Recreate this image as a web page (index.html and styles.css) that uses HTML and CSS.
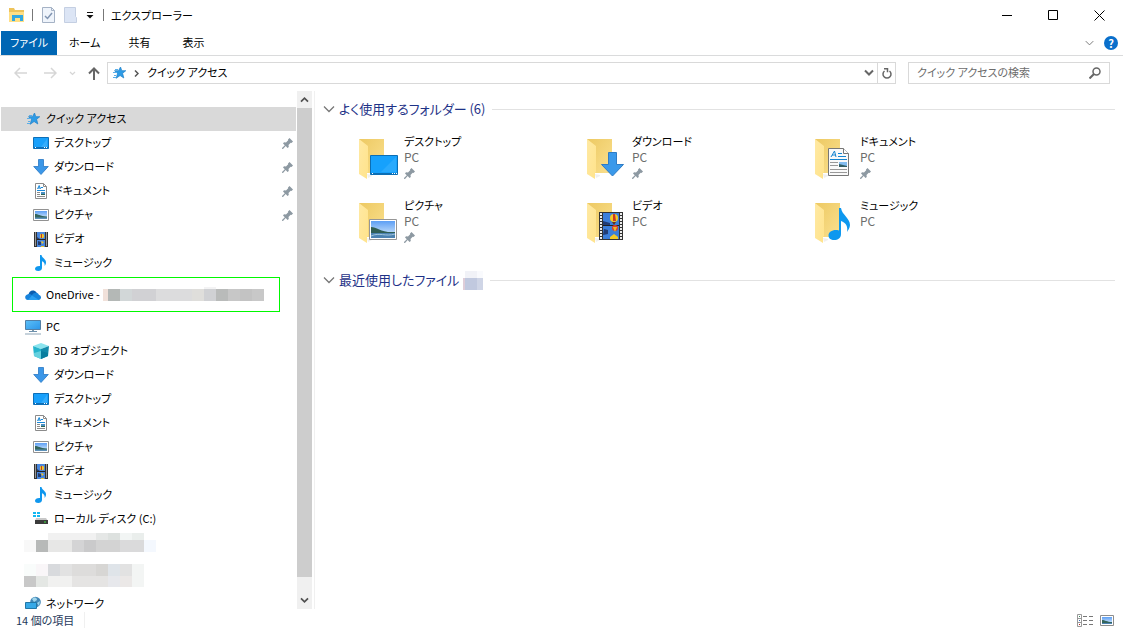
FILE: index.html
```html
<!DOCTYPE html>
<html lang="ja">
<head>
<meta charset="utf-8">
<title>エクスプローラー</title>
<link rel="stylesheet" href="styles.css">
</head>
<body>
<svg class="defs" aria-hidden="true">
  <defs>
    <linearGradient id="g-back" x1="0" y1="0" x2="1" y2="1"><stop offset="0" stop-color="#edc962"/><stop offset="1" stop-color="#fae08f"/></linearGradient>
    <linearGradient id="g-flap" x1="0" y1="0" x2="1" y2="1"><stop offset="0" stop-color="#ffe9a3"/><stop offset="1" stop-color="#ffe38b"/></linearGradient>
    <linearGradient id="g-sky" x1="0" y1="0" x2="0" y2="1"><stop offset="0" stop-color="#5d9ff5"/><stop offset="1" stop-color="#e2f1fb"/></linearGradient>
    <linearGradient id="g-screen" x1="0" y1="0" x2="1" y2="1"><stop offset="0" stop-color="#5cc0f8"/><stop offset="1" stop-color="#2b95e8"/></linearGradient>
  </defs>
  <symbol id="star" viewBox="0 0 16 16">
    <path d="M9.500 2l1.300 3.700h4l-3.200 2.600 1.200 4.700-3.700-2.500-3.900 2.800 1.300-4.800-3-2.800h4z" fill="#2d9be6" stroke="#1c7fc9" stroke-width=".7"/>
    <path d="M4 4.500h3M2 7.500h4M3 10.500h2M2 12.500h3" stroke="#5aaee8"/>
  </symbol>
  <symbol id="desktop" viewBox="0 0 16 16">
    <path d="M.5 2.500h15v11H.5z" fill="#18a0fb" stroke="#0d6fb8"/>
    <path d="M8 12l6-8v8z" fill="#35adfc"/>
    <path d="M1 12.500h14" stroke="#0d6fb8"/><path d="M2 12.500h1M11 12.500h1M13 12.500h1" stroke="#fff"/>
  </symbol>
  <symbol id="download" viewBox="0 0 16 16">
    <path d="M5.500.5h5v7h4.800L8 15.500.7 7.500h4.800z" fill="#3b97e8" stroke="#2877c4" stroke-width=".8"/>
  </symbol>
  <symbol id="document" viewBox="0 0 16 16">
    <path d="M2.500.5h8l3 3v12h-11z" fill="#fff" stroke="#8b8b8b"/><path d="M10.500.5v3h3" fill="none" stroke="#8b8b8b"/>
    <path d="M4.500 6l1.700-3.500L7.500 6M5 5h2" fill="none" stroke="#1988d8"/>
    <path d="M8 4.500h2M4 7.500h8" stroke="#1988d8"/><path d="M4 9.500h3M4 11.500h3M4 13.500h8" stroke="#8b8b8b"/>
    <path d="M8 9h4v3H8z" fill="#4a8fc2"/><path d="M8 11h4v1H8z" fill="#2d6250"/>
  </symbol>
  <symbol id="picture" viewBox="0 0 16 16">
    <path d="M.5 2.500h15v11H.5z" fill="#fff" stroke="#929292"/>
    <path d="M2 4h12v8H2z" fill="url(#g-sky)"/><path d="M2 7c3 0 5 2 12 2.500V11H2z" fill="#34665e"/><path d="M2 10.500h12V12H2z" fill="#5e92ba"/>
  </symbol>
  <symbol id="video" viewBox="0 0 16 16">
    <path d="M1 1h14v15H1z" fill="#333"/><path d="M4 1h8v15H4z" fill="#4785dc"/>
    <path d="M2.500 1.500v14M13.500 1.500v14" stroke="#fff" stroke-dasharray="1 1"/>
    <path d="M4 8.500h8" stroke="#222"/><circle cx="9" cy="5" r="2.200" fill="#f1c52c"/><path d="M8 3h1v4H8z" fill="#c33820"/>
    <path d="M4 6l3 2H4zM5 10l3 1v3H5z" fill="#233d70"/><path d="M8 10l3 1-2 2zM8 15h3v1H8z" fill="#f1c52c"/>
  </symbol>
  <symbol id="music" viewBox="0 0 16 16">
    <path d="M7 0h1.500c.3 3 4.700 4 4.500 7.500-.1 1.700-.7 2.600-1.300 3.500.3-3-1.200-4-2.700-4.700V13c0 1.700-1.700 3-3.800 3C3.400 16 2 15.200 2 13.800 2 12 4 10.800 7 11z" fill="#0f97ee"/>
  </symbol>
  <symbol id="cloud" viewBox="0 0 16 16">
    <path d="M3.500 8C3.500 4 8.500 1.500 11.500 5.500L13 8z" fill="#0a5db0"/><path d="M3 13C-.5 13-1 8 3 7.200 5 6.500 6 7.500 7 8l5 5z" fill="#1783dc"/><path d="M7 8c2-3 6-3 7 0 3 .5 2.500 5-.5 5H3z" fill="#1684dc"/><path d="M7 8.500L14 13H3z" fill="#2aa1f2"/>
  </symbol>
  <symbol id="pc" viewBox="0 0 16 16">
    <path d="M.5 1.500h15v9H.5z" fill="url(#g-screen)" stroke="#527fa5"/><path d="M7 11h2v1H7z" fill="#7e99ab"/><path d="M4 12.500h8" stroke="#6d91ad"/><path d="M0 15h16" stroke="#8da5b7"/>
  </symbol>
  <symbol id="cube" viewBox="0 0 16 16">
    <path d="M8 0l8 3-8 3-8-3z" fill="#8be4ee"/><path d="M0 3l8 3v10l-7-3z" fill="#25b5cd"/><path d="M8 6l8-3-1 10-7 3z" fill="#118aaa"/><path d="M1 10l7-2v8l-7-3z" fill="#65d1df"/><path d="M8 8l7 2v3l-7 3z" fill="#087d9e"/>
  </symbol>
  <symbol id="disk" viewBox="0 0 16 16">
    <path d="M0 1h3v2H0zM4 1h3v2H4zM0 4h3v2H0zM4 4h3v2H4z" fill="#12b7f1"/><path d="M3 7h10l2 3H2z" fill="#c8c8c8"/><path d="M2 9h13v4H2z" fill="#3b3b3b"/><path d="M11 11h2" stroke="#3ee542"/>
  </symbol>
  <symbol id="network" viewBox="0 0 16 16">
    <circle cx="10.500" cy="6" r="5.300" fill="#4388b7"/><path d="M7 3c3-3 5-1 5 1L9 6zM12 7l3-2-1 5z" fill="#a0d6ec"/><path d="M.5 6.500h11v6H.5z" fill="#37a9e7" stroke="#2277a6"/>
  </symbol>
  <symbol id="pin" viewBox="0 0 11 11">
    <path d="M6 1.500L7.500 0 11 3.500 9.500 5 8.700 4.800 6.500 7l.3 2L5.500 10 3.700 8.100 1 11 0 10.800V10l2.800-2.800L1 5.400 2 4.200l2 .3 2.200-2.200z" fill="#8d99a2"/>
  </symbol>
  <symbol id="folder" viewBox="0 -1 44 44">
    <path d="M9 36l5 1v1l-4 2z" fill="#efefef"/><path d="M1 1h25v34H9z" fill="url(#g-back)"/><path d="M1 1l9 7v26l-1 1v6L1 36z" fill="url(#g-flap)"/>
  </symbol>
  <symbol id="chev" viewBox="0 0 12 8"><path d="M1 1.500l5 5 5-5" fill="none" stroke="currentColor" stroke-width="1.300"/></symbol>
  <symbol id="chev-bold" viewBox="0 0 10 8"><path d="M1 1.500l4 4 4-4" fill="none" stroke="currentColor" stroke-width="2"/></symbol>
</svg>

<header class="titlebar">
  <svg class="quick" viewBox="0 0 18 16" width="18" height="16"><path d="M1 1h5l1 2h9v12H1z" fill="#eec35a"/><path d="M1 5h15v10H1z" fill="#ffdf85"/><path d="M4 8h11v6h-3v-3H7v3H4z" fill="#32a8e2"/></svg>
  <span class="bar"></span>
  <button class="plain" aria-label="プロパティ"><svg viewBox="0 0 13 16" width="13" height="16"><path d="M.5.500h9l3 3v12H.5z" fill="#eff4fb" stroke="#a5b2c5"/><path d="M9.500.5v3h3" fill="none" stroke="#a5b2c5"/><path d="M3 9l2.500 2.500L10 6" fill="none" stroke="#8194b1" stroke-width="1.500"/></svg></button>
  <button class="plain" aria-label="新しいフォルダー"><svg viewBox="0 0 13 16" width="13" height="16"><path d="M.5.500h11v9l1 1v5H.5z" fill="#dce5f5" stroke="#c4cfe2"/></svg></button>
  <button class="plain" aria-label="カスタマイズ"><svg viewBox="0 0 8 8" width="8" height="8"><path d="M1 1.500h6" stroke="#111"/><path d="M.5 4h7L4 7.500z" fill="#111"/></svg></button>
  <span class="bar"></span>
  <h1 class="title">エクスプローラー</h1>
  <div class="window-buttons">
    <button class="plain win" aria-label="最小化"><svg viewBox="0 0 11 11" width="11" height="11"><path d="M0 5.500h10" stroke="#000"/></svg></button>
    <button class="plain win" aria-label="最大化"><svg viewBox="0 0 11 11" width="11" height="11"><path d="M.5.500h9v9h-9z" fill="none" stroke="#000"/></svg></button>
    <button class="plain win" aria-label="閉じる"><svg viewBox="0 0 11 11" width="11" height="11"><path d="M.5.500l10 10M10.500.500l-10 10" stroke="#000"/></svg></button>
  </div>
</header>

<nav class="ribbon">
  <button class="tab active">ファイル</button>
  <button class="tab">ホーム</button>
  <button class="tab">共有</button>
  <button class="tab">表示</button>
  <div class="ribbon-tools">
    <button class="plain muted" aria-label="リボンの展開"><svg width="9" height="6"><use href="#chev"/></svg></button>
    <button class="help" aria-label="ヘルプ">?</button>
  </div>
</nav>

<div class="addressbar">
  <div class="arrows">
    <button class="plain off" aria-label="戻る"><svg viewBox="0 0 13 12" width="13" height="12"><path d="M13 6H1.500M6 1L1 6l5 5" fill="none" stroke="currentColor" stroke-width="1.500"/></svg></button>
    <button class="plain off" aria-label="進む"><svg viewBox="0 0 13 12" width="13" height="12"><path d="M0 6h11.500M7 1l5 5-5 5" fill="none" stroke="currentColor" stroke-width="1.500"/></svg></button>
    <button class="plain off" aria-label="履歴"><svg width="7" height="5"><use href="#chev-bold"/></svg></button>
    <button class="plain up" aria-label="上へ"><svg viewBox="0 0 12 13" width="12" height="13"><path d="M6 13V1.500M1 6.500l5-5 5 5" fill="none" stroke="currentColor" stroke-width="2"/></svg></button>
  </div>
  <div class="address">
    <svg class="i16"><use href="#star"/></svg>
    <svg viewBox="0 0 5 7" width="5" height="7"><path d="M1 .500l3 3-3 3" fill="none" stroke="#555" stroke-width="1.500"/></svg>
    <button class="plain crumb">クイック アクセス</button>
    <button class="plain drop" aria-label="候補"><svg width="10" height="8"><use href="#chev-bold"/></svg></button>
    <button class="plain refresh" aria-label="更新"><svg viewBox="0 0 10 11" width="10" height="11"><path d="M2.500 3A4 4 0 1 0 7.500 3M2 .800h3.500v3.500" fill="none" stroke="#666" stroke-width="1.500"/></svg></button>
  </div>
  <label class="search">
    <input type="search" placeholder="クイック アクセスの検索" aria-label="クイック アクセスの検索">
    <svg viewBox="0 0 12 12" width="12" height="12"><circle cx="7.500" cy="4.500" r="3.500" fill="none" stroke="#666" stroke-width="1.500"/><path d="M5 7L.500 11.500" stroke="#666" stroke-width="2"/></svg>
  </label>
</div>

<div class="body">
  <nav class="tree">
    <a class="row top selected"><svg class="i16"><use href="#star"/></svg>クイック アクセス</a>
    <a class="row"><svg class="i16"><use href="#desktop"/></svg>デスクトップ<svg class="pin"><use href="#pin"/></svg></a>
    <a class="row"><svg class="i16"><use href="#download"/></svg>ダウンロード<svg class="pin"><use href="#pin"/></svg></a>
    <a class="row"><svg class="i16"><use href="#document"/></svg>ドキュメント<svg class="pin"><use href="#pin"/></svg></a>
    <a class="row"><svg class="i16"><use href="#picture"/></svg>ピクチャ<svg class="pin"><use href="#pin"/></svg></a>
    <a class="row"><svg class="i16"><use href="#video"/></svg>ビデオ</a>
    <a class="row"><svg class="i16"><use href="#music"/></svg>ミュージック</a>
    <a class="row marked"><svg class="i16"><use href="#cloud"/></svg>OneDrive -<svg class="mask-name" viewBox="0 0 161 14" width="161" height="14"><path d="M0 2h5v12H0z" fill="#f1e1da"/><path d="M5 2h12v12H5z" fill="#b4b8b6"/><path d="M17 2h12v12H17z" fill="#d2d7d8"/><path d="M29 2h24v12H29z" fill="#d1d1d4"/><path d="M53 2h36v12H53z" fill="#dcdcdd"/><path d="M89 2h12v12H89z" fill="#dfdedb"/><path d="M101 0h12v2h-12z" fill="#f3f3f4"/><path d="M101 2h12v12h-12z" fill="#d0d1d4"/><path d="M113 2h12v12h-12z" fill="#b9bbba"/><path d="M125 2h12v12h-12z" fill="#c7c7c7"/><path d="M137 2h12v12h-12z" fill="#c3c3c3"/><path d="M149 2h12v12h-12z" fill="#c8c8c8"/></svg></a>
    <a class="row top"><svg class="i16"><use href="#pc"/></svg>PC</a>
    <a class="row"><svg class="i16"><use href="#cube"/></svg>3D オブジェクト</a>
    <a class="row"><svg class="i16"><use href="#download"/></svg>ダウンロード</a>
    <a class="row"><svg class="i16"><use href="#desktop"/></svg>デスクトップ</a>
    <a class="row"><svg class="i16"><use href="#document"/></svg>ドキュメント</a>
    <a class="row"><svg class="i16"><use href="#picture"/></svg>ピクチャ</a>
    <a class="row"><svg class="i16"><use href="#video"/></svg>ビデオ</a>
    <a class="row"><svg class="i16"><use href="#music"/></svg>ミュージック</a>
    <a class="row"><svg class="i16"><use href="#disk"/></svg>ローカル ディスク (C:)</a>
    <svg class="mask" viewBox="0 0 132 19" width="132" height="19"><path d="M24 0h48v7H24z" fill="#f1f1f1"/><path d="M72 0h12v7H72z" fill="#e5e7e6"/><path d="M84 0h12v7H84z" fill="#dde1df"/><path d="M96 0h12v7H96z" fill="#f2f5f4"/><path d="M108 0h12v7h-12z" fill="#eaeeec"/><path d="M0 7h12v12H0z" fill="#f8f8f8"/><path d="M12 7h12v12H12z" fill="#b7b9b8"/><path d="M24 7h24v12H24z" fill="#e7e7e6"/><path d="M48 7h12v12H48z" fill="#d4d4d5"/><path d="M60 7h12v12H60z" fill="#cacacb"/><path d="M72 7h24v12H72z" fill="#d3d3d3"/><path d="M96 7h24v12H96z" fill="#dadadb"/><path d="M120 7h12v12h-12z" fill="#f4f8fe"/></svg>
    <svg class="mask second" viewBox="0 0 132 23" width="132" height="23"><path d="M0 0h12v12H0z" fill="#f9fcfb"/><path d="M12 0h12v12H12z" fill="#f9f6f8"/><path d="M24 0h12v12H24z" fill="#d8dadd"/><path d="M36 0h12v12H36z" fill="#e2e2e2"/><path d="M48 0h24v12H48z" fill="#dddcdb"/><path d="M72 0h12v12H72z" fill="#d7d6d4"/><path d="M84 0h12v12H84z" fill="#dfe4e9"/><path d="M96 0h12v12H96z" fill="#e2e2e2"/><path d="M108 0h12v23h-12z" fill="#f3f5f4"/><path d="M0 12h12v11H0z" fill="#c8c8c8"/><path d="M12 12h12v11H12z" fill="#e4e7e4"/><path d="M24 12h24v11H24z" fill="#f1f1f0"/><path d="M48 12h36v11H48z" fill="#e5e4e3"/><path d="M84 12h12v11H84z" fill="#e7e8ec"/><path d="M96 12h12v11H96z" fill="#ebe8e7"/></svg>
    <a class="row top"><svg class="i16"><use href="#network"/></svg>ネットワーク</a>
  </nav>
  <div class="scrollbar">
    <button class="plain arrow flip" aria-label="上にスクロール"><svg width="9" height="7"><use href="#chev-bold"/></svg></button>
    <div class="thumb"></div>
    <button class="plain arrow" aria-label="下にスクロール"><svg width="9" height="7"><use href="#chev-bold"/></svg></button>
  </div>
  <main class="content">
    <h2 class="group"><svg class="fold"><use href="#chev"/></svg>よく使用するフォルダー (6)</h2>
    <div class="folders">
      <a class="item"><svg class="big" viewBox="0 -1 44 44"><use href="#folder" y="-1" width="44" height="44"/><path d="M12.500 17.500h27v19h-27z" fill="#16a1fc" stroke="#0c6eb4"/><path d="M23 34l15-15v15z" fill="#2aaafd"/><path d="M13 35.500h26" stroke="#0c6eb4"/><path d="M14 35.500h1M34 35.500h1M36 35.500h1M38 35.500h1" stroke="#fff"/></svg><div class="info"><div class="name">デスクトップ</div><div class="place">PC</div><svg class="pin"><use href="#pin"/></svg></div></a>
      <a class="item"><svg class="big" viewBox="0 -1 44 44"><use href="#folder" y="-1" width="44" height="44"/><path d="M22.500 14.500h8v12h7L26.500 38 15.500 26.500h7z" fill="#3a99ea" stroke="#2e7cc5"/></svg><div class="info"><div class="name">ダウンロード</div><div class="place">PC</div><svg class="pin"><use href="#pin"/></svg></div></a>
      <a class="item"><svg class="big" viewBox="0 -1 44 44"><use href="#folder" y="-1" width="44" height="44"/><path d="M14.500 10.500h15l5 5v22h-20z" fill="#fafafa" stroke="#777"/><path d="M29.500 10.500v5h5" fill="#fff" stroke="#777"/><path d="M17 19l3.500-6 1.500 6M18 17h4" fill="none" stroke="#1685d0"/><path d="M24 15.500h4M24 18.500h8M16 21.500h17" stroke="#1685d0"/><path d="M16 24.500h8M16 27.500h8M16 31.500h17M16 34.500h17" stroke="#999"/><path d="M25 24h8v5h-8z" fill="#83bcf0"/><path d="M25 26l8 2v1h-8z" fill="#315c62"/></svg><div class="info"><div class="name">ドキュメント</div><div class="place">PC</div><svg class="pin"><use href="#pin"/></svg></div></a>
      <a class="item"><svg class="big" viewBox="0 -1 44 44"><use href="#folder" y="-1" width="44" height="44"/><path d="M11.500 17.500h27v20h-27z" fill="#fff" stroke="#969696"/><path d="M13 19h24v17H13z" fill="url(#g-sky)"/><path d="M13 25c6 0 10 6 24 5v2H13z" fill="#315f55"/><path d="M13 31h24v5H13z" fill="#4c82b1"/><path d="M13 34c9-4 14 1 24-2" fill="none" stroke="#a2c6dc"/></svg><div class="info"><div class="name">ピクチャ</div><div class="place">PC</div><svg class="pin"><use href="#pin"/></svg></div></a>
      <a class="item"><svg class="big" viewBox="0 -1 44 44"><use href="#folder" y="-1" width="44" height="44"/><path d="M13 10h24v28H13z" fill="#343434"/><path d="M17 11h16v26H17z" fill="#3b7edb"/><path d="M15 11v26M35 11v26" stroke="#eee" stroke-width="2" stroke-dasharray="2 1"/><path d="M17 23.500h16" stroke="#222"/><path d="M17 19l7 2v2h-7zM18 27l4 1v4l-5 1z" fill="#203c76"/><circle cx="28" cy="16" r="4" fill="#f3ca28"/><path d="M27 12h2l1 7h-3z" fill="#cc3924"/><path d="M26 20h4l-2 3z" fill="#68331b"/><circle cx="29" cy="26" r="3" fill="#db3f27"/><path d="M27 25h4l-2 5z" fill="#e8ba2b"/><path d="M24 37v-2l4-3 4 3v2z" fill="#f3ca28"/></svg><div class="info"><div class="name">ビデオ</div><div class="place">PC</div></div></a>
      <a class="item"><svg class="big" viewBox="0 -1 44 44"><use href="#folder" y="-1" width="44" height="44"/><path d="M25 6h2c1 7 9 10 9 17 0 3-2 5-3 7 1-6-1-9-6-11v13c0 4-3 6-7 6-3 0-5.500-1.500-5.500-4.500 0-4 5-6.500 10.500-5z" fill="#0e98ef"/></svg><div class="info"><div class="name">ミュージック</div><div class="place">PC</div></div></a>
    </div>
    <h2 class="group recent"><svg class="fold"><use href="#chev"/></svg>最近使用したファイル<svg class="mask-count" viewBox="0 0 20 19" width="20" height="19"><path d="M2 0h12v7H2z" fill="#f1f2f7"/><path d="M14 0h6v7h-6z" fill="#f9fafd"/><path d="M0 7h2v12H0z" fill="#dfcdd8"/><path d="M2 7h12v12H2z" fill="#c1c9df"/><path d="M14 7h6v12h-6z" fill="#cfd5e6"/></svg></h2>
  </main>
</div>

<footer class="status">
  <span class="count">14 個の項目</span>
  <div class="views">
    <button class="plain" aria-label="詳細"><svg viewBox="0 0 17 13" width="17" height="13"><path d="M.5.500h4v12h-4zM.5 4.500h4M.5 8.500h4" fill="none" stroke="#999"/><path d="M2 2.500h1" stroke="#3f8a62"/><path d="M2 6.500h1" stroke="#3667c0"/><path d="M2 10.500h1" stroke="#b22"/><path d="M6 2.500h4M12 2.500h4M6 6.500h4M12 6.500h4M6 10.500h4M12 10.500h4" stroke="#777"/></svg></button>
    <button class="plain" aria-label="大アイコン"><svg viewBox="0 0 14 11" width="14" height="11"><path d="M.5.500h13v10H.5z" fill="#fff" stroke="#8d8d8d"/><path d="M2 2h10v7H2z" fill="url(#g-sky)"/><path d="M2 5c3 0 5 2 10 2v1H2z" fill="#34665e"/><path d="M2 8h10v1H2z" fill="#4c82b1"/></svg></button>
  </div>
</footer>
</body>
</html>
```

FILE: styles.css
```css
* { box-sizing: border-box; }

body {
  margin: 0;
  height: 100vh;
  display: flex;
  flex-direction: column;
  overflow: hidden;
  background: #fff;
  color: #000;
  font-family: "Noto Sans CJK JP", "Noto Sans", sans-serif;
  font-size: 11px;
  line-height: 16px;
  font-feature-settings: "palt";
}

svg { display: block; flex: none; }
.defs { position: absolute; width: 0; height: 0; }
button, input { font: inherit; font-feature-settings: inherit; color: inherit; }
.plain { display: flex; align-items: center; justify-content: center; padding: 0; border: 0; background: none; }
.i16 { width: 16px; height: 16px; }
.pin { width: 11px; height: 11px; }

/* title bar */
.titlebar { display: flex; align-items: center; height: 31px; padding: 0 1px 1px 8px; gap: 9px; }
.titlebar .quick { margin-right: -3px; }
.bar { width: 1px; height: 12px; background: #777; }
.title { margin: 0 0 0 -2px; font-size: 11px; font-weight: 400; }
.window-buttons { display: flex; margin-left: auto; }
.win { width: 46px; height: 30px; }

/* ribbon */
.ribbon { display: flex; align-items: stretch; height: 25px; padding-left: 1px; border-bottom: 1px solid #dadbdc; }
.tab { min-width: 54px; padding: 0 12px 2px; border: 0; background: none; }
.tab.active { min-width: 56px; padding: 0 0 2px; background: #0066b4; color: #fff; }
.ribbon-tools { display: flex; align-items: center; gap: 10px; margin-left: auto; padding-right: 5px; }
.muted { color: #777; }
.help { width: 14px; height: 14px; padding: 0; border: 0; border-radius: 50%; background: #0a6fcb; color: #fff; font-weight: 700; line-height: 14px; }

/* address bar */
.addressbar { display: flex; gap: 12px; height: 35px; padding: 6px 13px 7px 14px; }
.arrows { display: flex; align-items: center; gap: 17px; margin-right: -5px; color: #777; }
.arrows .off { color: #d6d6d6; }
.arrows .off + .off + .off { margin: 0 -5px; }
.arrows .up { color: #666; }
.address { display: flex; flex: 1; align-items: center; min-width: 0; padding-left: 3px; gap: 7px; border: 1px solid #d9d9d9; }
.crumb { margin-left: 1px; padding-bottom: 2px; }
.drop { margin-left: auto; margin-right: -4px; color: #666; }
.refresh { align-self: stretch; width: 18px; border-left: 1px solid #d9d9d9; }
.search { display: flex; align-items: center; width: 202px; padding: 0 8px; border: 1px solid #d9d9d9; }
.search input { flex: 1; min-width: 0; padding: 0 0 2px; border: 0; outline: 0; background: none; }
.search input::placeholder { color: #6d6d6d; opacity: 1; }

/* body */
.body { display: flex; flex: 1; min-height: 0; }
.tree { display: flex; flex-direction: column; width: 296px; padding: 16px 0 0 1px; overflow: hidden; }
.row { display: flex; flex: none; align-items: center; height: 24px; padding: 0 3px 2px 32px; gap: 5px; white-space: nowrap; }
.row svg { margin-top: 2px; }
.row.top { padding-left: 24px; }
.row.selected { background: #d9d9d9; }
.row .pin { margin-left: auto; }
.row.marked { height: 35px; margin: 2px 16px 3px 11px; padding: 0 0 2px 12px; border: 1px solid #00f800; }
.row .mask-name { margin: 0 0 0 -2px; }
.mask { margin: 2px 0 0 23px; }
.mask.second { margin: 12px 0 5px 23px; }

.scrollbar { display: flex; flex-direction: column; width: 17px; padding: 0 1px; background: #f0f0f0; background-clip: content-box; }
.arrow { height: 17px; color: #505050; }
.thumb { flex: 1; margin-bottom: 15px; background: #cdcdcd; }
.flip svg { transform: rotate(180deg); }

.content { flex: 1; min-width: 0; padding: 6px 8px 0; border-left: 1px solid #f0f0f0; margin-left: 1px; }
.group { display: flex; align-items: center; height: 24px; margin: 0; gap: 4px; color: #1e3287; font-size: 13px; font-weight: 400; white-space: nowrap; }
.group::after { content: ""; flex: 1; height: 1px; margin-left: 3px; background: #e2e2e2; }
.fold { width: 12px; height: 8px; color: #777; }
.folders { display: grid; grid-template-columns: repeat(auto-fill, 228px); row-gap: 16px; padding: 12px 0 23px 35px; }
.item { display: flex; align-items: flex-end; min-height: 48px; gap: 2px; }
.big { width: 44px; height: 44px; }
.info { align-self: flex-start; }
.place { color: #6d6d6d; font-size: 12px; }
.info .pin { margin-top: 3px; }

/* status bar */
.status { display: flex; align-items: center; height: 24px; padding: 0 9px 2px 16px; color: #1e395b; }
.count { padding-right: 10px; border-right: 1px solid #f0f0f0; }
.views { display: flex; align-items: center; gap: 6px; margin-left: auto; }
```
